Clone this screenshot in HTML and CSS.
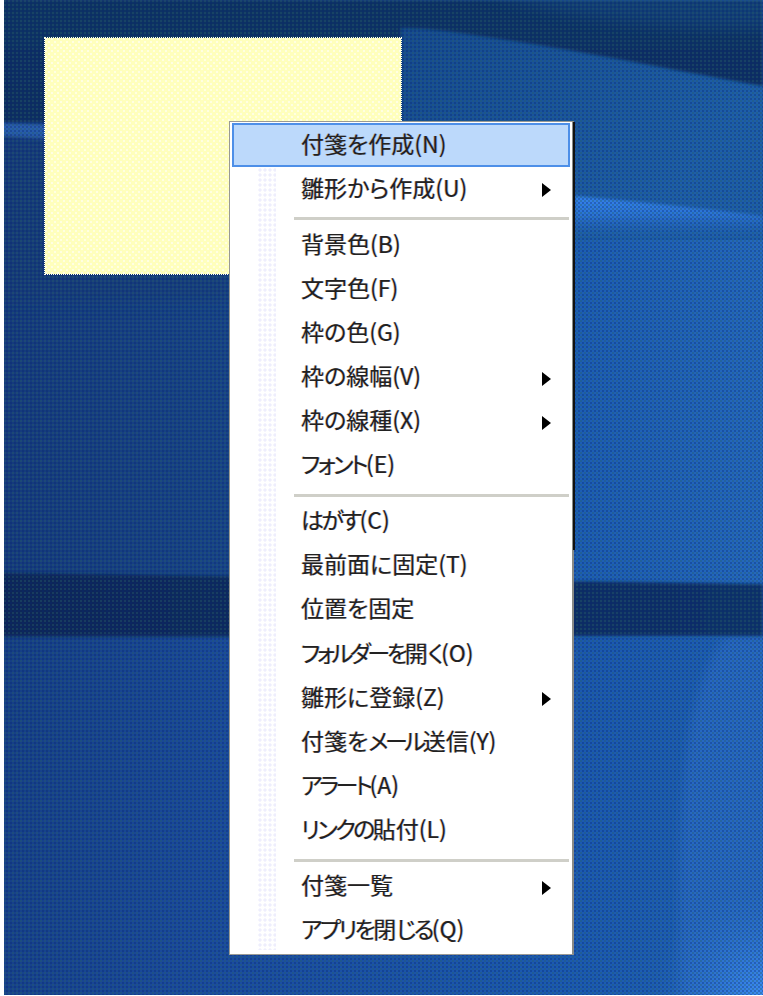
FILE: index.html
```html
<!DOCTYPE html>
<html lang="ja">
<head>
<meta charset="utf-8">
<title>付箋</title>
<link rel="stylesheet" href="styles.css">
</head>
<body>
<div class="desktop">
  <svg class="wallpaper" width="763" height="996" viewBox="0 0 763 996" xmlns="http://www.w3.org/2000/svg">
    <defs>
      <linearGradient id="base" x1="0" y1="0" x2="763" y2="0" gradientUnits="userSpaceOnUse">
        <stop offset="0" stop-color="#153a7c"/>
        <stop offset="0.3" stop-color="#174388"/>
        <stop offset="0.75" stop-color="#1c5db4"/>
        <stop offset="1" stop-color="#2468be"/>
      </linearGradient>
      <linearGradient id="top" x1="0" y1="0" x2="0" y2="122" gradientUnits="userSpaceOnUse">
        <stop offset="0" stop-color="#0e3064"/>
        <stop offset="1" stop-color="#0d2e60"/>
      </linearGradient>
      <linearGradient id="mid" x1="401" y1="30" x2="640" y2="230" gradientUnits="userSpaceOnUse">
        <stop offset="0" stop-color="#154a8e"/>
        <stop offset="1" stop-color="#1d5eaa"/>
      </linearGradient>
      <linearGradient id="streak" x1="0" y1="196" x2="0" y2="240" gradientUnits="userSpaceOnUse">
        <stop offset="0" stop-color="#3384ee"/>
        <stop offset="0.45" stop-color="#2a72d4"/>
        <stop offset="1" stop-color="#1e60b4" stop-opacity="0"/>
      </linearGradient>
      <linearGradient id="band" x1="0" y1="0" x2="763" y2="0" gradientUnits="userSpaceOnUse">
        <stop offset="0" stop-color="#0a2658"/>
        <stop offset="1" stop-color="#0c3068"/>
      </linearGradient>
      <linearGradient id="lower" x1="0" y1="640" x2="763" y2="780" gradientUnits="userSpaceOnUse">
        <stop offset="0" stop-color="#153e84"/>
        <stop offset="0.3" stop-color="#1a4a9c"/>
        <stop offset="0.8" stop-color="#1b5ab2"/>
        <stop offset="1" stop-color="#1e60b6"/>
      </linearGradient>
      <radialGradient id="glow" cx="763" cy="996" r="110" gradientUnits="userSpaceOnUse">
        <stop offset="0" stop-color="#3c8cf4"/>
        <stop offset="1" stop-color="#2a70cc" stop-opacity="0"/>
      </radialGradient>
      <filter id="soft" x="-5%" y="-5%" width="110%" height="110%">
        <feGaussianBlur stdDeviation="1.6"/>
      </filter>
      <filter id="mellow" x="-20%" y="-5%" width="140%" height="110%">
        <feGaussianBlur stdDeviation="5"/>
      </filter>
      <filter id="wide" x="-20%" y="-20%" width="140%" height="140%">
        <feGaussianBlur stdDeviation="8"/>
      </filter>
      <pattern id="dots" width="4" height="4" patternUnits="userSpaceOnUse">
        <rect x="0" y="0" width="2" height="2" fill="#27606a" opacity="0.38"/>
        <rect x="2" y="2" width="2" height="2" fill="#07246e" opacity="0.32"/>
      </pattern>
    </defs>
    <rect width="763" height="996" fill="url(#base)"/>
    <path d="M401 20H763V240H401Z" fill="url(#mid)"/>
    <path d="M575 196C640 202 700 208 763 216V250H575Z" fill="url(#streak)" filter="url(#soft)"/>
    <path d="M0 0H763V86C680 72 580 50 480 36C450 31 425 28 401 28V122H0Z" fill="url(#top)" filter="url(#soft)"/>
    <path d="M480 -10H773V28C660 30 560 18 480 -10Z" fill="#1c5aa0" opacity="0.32" filter="url(#wide)"/>
    <path d="M0 123L60 125V140L0 136Z" fill="#2c5fb0" filter="url(#soft)"/>
    <path d="M0 140H230V300H0Z" fill="#143a74" opacity="0.5" filter="url(#wide)"/>
    <rect y="638" width="763" height="358" fill="url(#lower)"/>
    <path d="M725 636H773V1000H680C676 900 680 780 692 720C700 680 712 655 725 636Z" fill="#2668c2" filter="url(#mellow)"/>
    <rect x="600" y="880" width="163" height="116" fill="url(#glow)"/>
    <path d="M0 573L763 584V636H0Z" fill="url(#band)" filter="url(#soft)"/>
    <rect width="763" height="996" fill="url(#dots)"/>
    <rect width="4" height="996" fill="#fff"/>
    <rect y="995" width="763" height="1" fill="#fff"/>
  </svg>

  <div class="note"></div>

  <div class="menu">
    <div class="gutter"></div>
    <div class="item active"><span>付箋を作成(N)</span></div>
    <div class="item"><span>雛形から作成(U)</span><i class="arrow"></i></div>
    <div class="sep"></div>
    <div class="item"><span>背景色(B)</span></div>
    <div class="item"><span>文字色(F)</span></div>
    <div class="item"><span>枠の色(G)</span></div>
    <div class="item"><span>枠の線幅(V)</span><i class="arrow"></i></div>
    <div class="item"><span>枠の線種(X)</span><i class="arrow"></i></div>
    <div class="item"><span><b class="k">フォント</b>(E)</span></div>
    <div class="sep"></div>
    <div class="item"><span><b class="k">はがす</b>(C)</span></div>
    <div class="item"><span>最前面に固定(T)</span></div>
    <div class="item"><span>位置を固定</span></div>
    <div class="item"><span><b class="k tight">フォルダーを</b>開<b class="k">く</b>(O)</span></div>
    <div class="item"><span>雛形に登録(Z)</span><i class="arrow"></i></div>
    <div class="item"><span>付箋を<b class="k tight">メール</b>送信(Y)</span></div>
    <div class="item"><span><b class="k tight">アラート</b>(A)</span></div>
    <div class="item"><span><b class="k">リンクの</b>貼付(L)</span></div>
    <div class="sep"></div>
    <div class="item"><span>付箋一覧</span><i class="arrow"></i></div>
    <div class="item"><span><b class="k">アプリを</b>閉<b class="k">じる</b>(Q)</span></div>
  </div>
</div>
</body>
</html>
```

FILE: styles.css
```css
html, body {
  margin: 0;
  padding: 0;
}

body {
  width: 763px;
  height: 996px;
  overflow: hidden;
  font-family: "Noto Sans CJK JP", "Noto Sans", sans-serif;
}

.desktop {
  position: relative;
  width: 763px;
  height: 996px;
  overflow: hidden;
}

.wallpaper {
  position: absolute;
  left: 0;
  top: 0;
  display: block;
}

.note {
  position: absolute;
  left: 45px;
  top: 38px;
  width: 356px;
  height: 236px;
  background-color: #ffffbc;
  background-image:
    radial-gradient(circle at 1px 1px, #ffffe2 1px, transparent 1.3px),
    radial-gradient(circle at 4px 4px, #ffffe2 1px, transparent 1.3px);
  background-size: 6px 6px;
  outline: 1px dotted #fffff0;
}

.menu {
  position: absolute;
  left: 229px;
  top: 121px;
  width: 345px;
  height: 834px;
  box-sizing: border-box;
  padding: 1px 2px 1px 2px;
  background: #fff;
  border: 1px solid #9a9a94;
  border-right: 2px solid #8a8a86;
  display: flex;
  flex-direction: column;
}

.menu::after {
  content: "";
  position: absolute;
  right: -3px;
  top: 0;
  width: 2px;
  height: 428px;
  background: #111;
}

.gutter {
  position: absolute;
  left: 28px;
  top: 46px;
  width: 18px;
  bottom: 4px;
  background-image: radial-gradient(circle at 2px 2px, #eeeefd 1.4px, transparent 1.8px);
  background-size: 5px 5px;
}

.item {
  position: relative;
  flex: none;
  height: 44.1px;
  box-sizing: border-box;
  padding: 0 19px 4px 69px;
  display: flex;
  align-items: center;
  justify-content: space-between;
  font-size: 23px;
  line-height: 1;
  color: #222;
  font-feature-settings: "palt";
  text-shadow: -0.7px 0 rgba(205, 130, 50, 0.4), 0.7px 0 rgba(50, 100, 205, 0.4);
}

.k {
  font-weight: inherit;
  letter-spacing: -2.6px;
}

.k.tight {
  letter-spacing: -3.3px;
}

.item.active {
  background: #bcd9fb;
  outline: 2px solid #4d8fe8;
  outline-offset: -2px;
}

.arrow {
  display: block;
  width: 0;
  height: 0;
  margin-top: 6px;
  border-left: 9px solid #000;
  border-top: 7.5px solid transparent;
  border-bottom: 7.5px solid transparent;
}

.sep {
  position: relative;
  flex: none;
  height: 12px;
  margin-left: 62px;
  margin-right: 1px;
}

.sep::after {
  content: "";
  position: absolute;
  left: 0;
  right: 0;
  top: 6px;
  height: 3px;
  background: #cfcfc8;
}
```
